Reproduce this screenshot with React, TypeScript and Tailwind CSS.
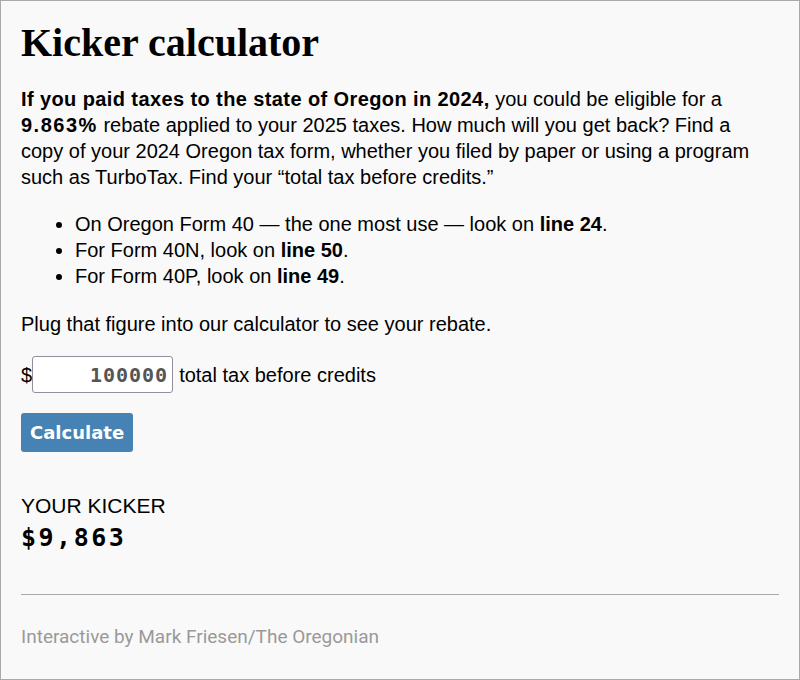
import { useState } from "react";

const sans = "font-['Liberation_Sans',Arial,sans-serif]";
const mono = "font-['DejaVu_Sans_Mono',monospace]";

export default function App() {
  const [amount, setAmount] = useState("100000");
  const [kicker, setKicker] = useState(9863);

  const calc = () => {
    const n = parseFloat(amount.replace(/[^0-9.]/g, "")) || 0;
    setKicker(Math.round(n * 0.09863));
  };

  return (
    <div className={`min-h-[680px] bg-[#f9f9f9] border border-[#aaaaaa] px-5 pt-[19px] text-black ${sans}`}>
      <h1 className="font-['Liberation_Serif',serif] font-bold text-[40px] leading-[46px]">Kicker calculator</h1>

      <p className="mt-[20px] pr-[20px] text-[20px] leading-[26px]">
        <b className="tracking-[0.4px]">If you paid taxes to the state of Oregon in 2024,</b> you could be eligible
        for a <b className="tracking-[1.5px]">9.863%</b> rebate applied to your 2025 taxes. How much will you get
        back? Find a copy of your 2024 Oregon tax form, whether you filed by paper or using a program such as
        TurboTax. Find your “total tax before credits.”
      </p>

      <ul className="mt-[21px] list-disc pl-[54px] text-[20px] leading-[26px]">
        <li>
          On Oregon Form 40 — the one most use — look on <b>line 24</b>.
        </li>
        <li>
          For Form 40N, look on <b>line 50</b>.
        </li>
        <li>
          For Form 40P, look on <b>line 49</b>.
        </li>
      </ul>

      <p className="mt-[22px] text-[20px] leading-[26px]">Plug that figure into our calculator to see your rebate.</p>

      <div className="mt-[19px] flex items-center text-[20px]">
        <span>$</span>
        <input
          value={amount}
          onChange={(e) => setAmount(e.target.value)}
          className={`w-[141px] h-[37px] bg-white border border-[#8f8f9d] rounded-[3px] px-[4px] text-right font-bold text-[20px] tracking-[1px] text-[#555555] ${mono}`}
        />
        <span className="ml-[6px]">total tax before credits</span>
      </div>

      <button
        onClick={calc}
        className="mt-[20px] block h-[39px] px-[9px] rounded-[3px] bg-[#4682b4] text-white font-bold text-[18px] font-['DejaVu_Sans',sans-serif]"
      >
        Calculate
      </button>

      <div className="mt-[42px] text-[21px] leading-[24px]">YOUR KICKER</div>
      <div className={`mt-[4px] font-bold text-[25px] tracking-[2.5px] leading-[32px] ${mono}`}>
        ${kicker.toLocaleString("en-US")}
      </div>

      <hr className="mt-[40px] border-t border-[#aaaaaa]" />

      <p className="mt-[28px] text-[#999999] text-[19px] font-['Roboto','Liberation_Sans',sans-serif]">
        Interactive by Mark Friesen/The Oregonian
      </p>
    </div>
  );
}
